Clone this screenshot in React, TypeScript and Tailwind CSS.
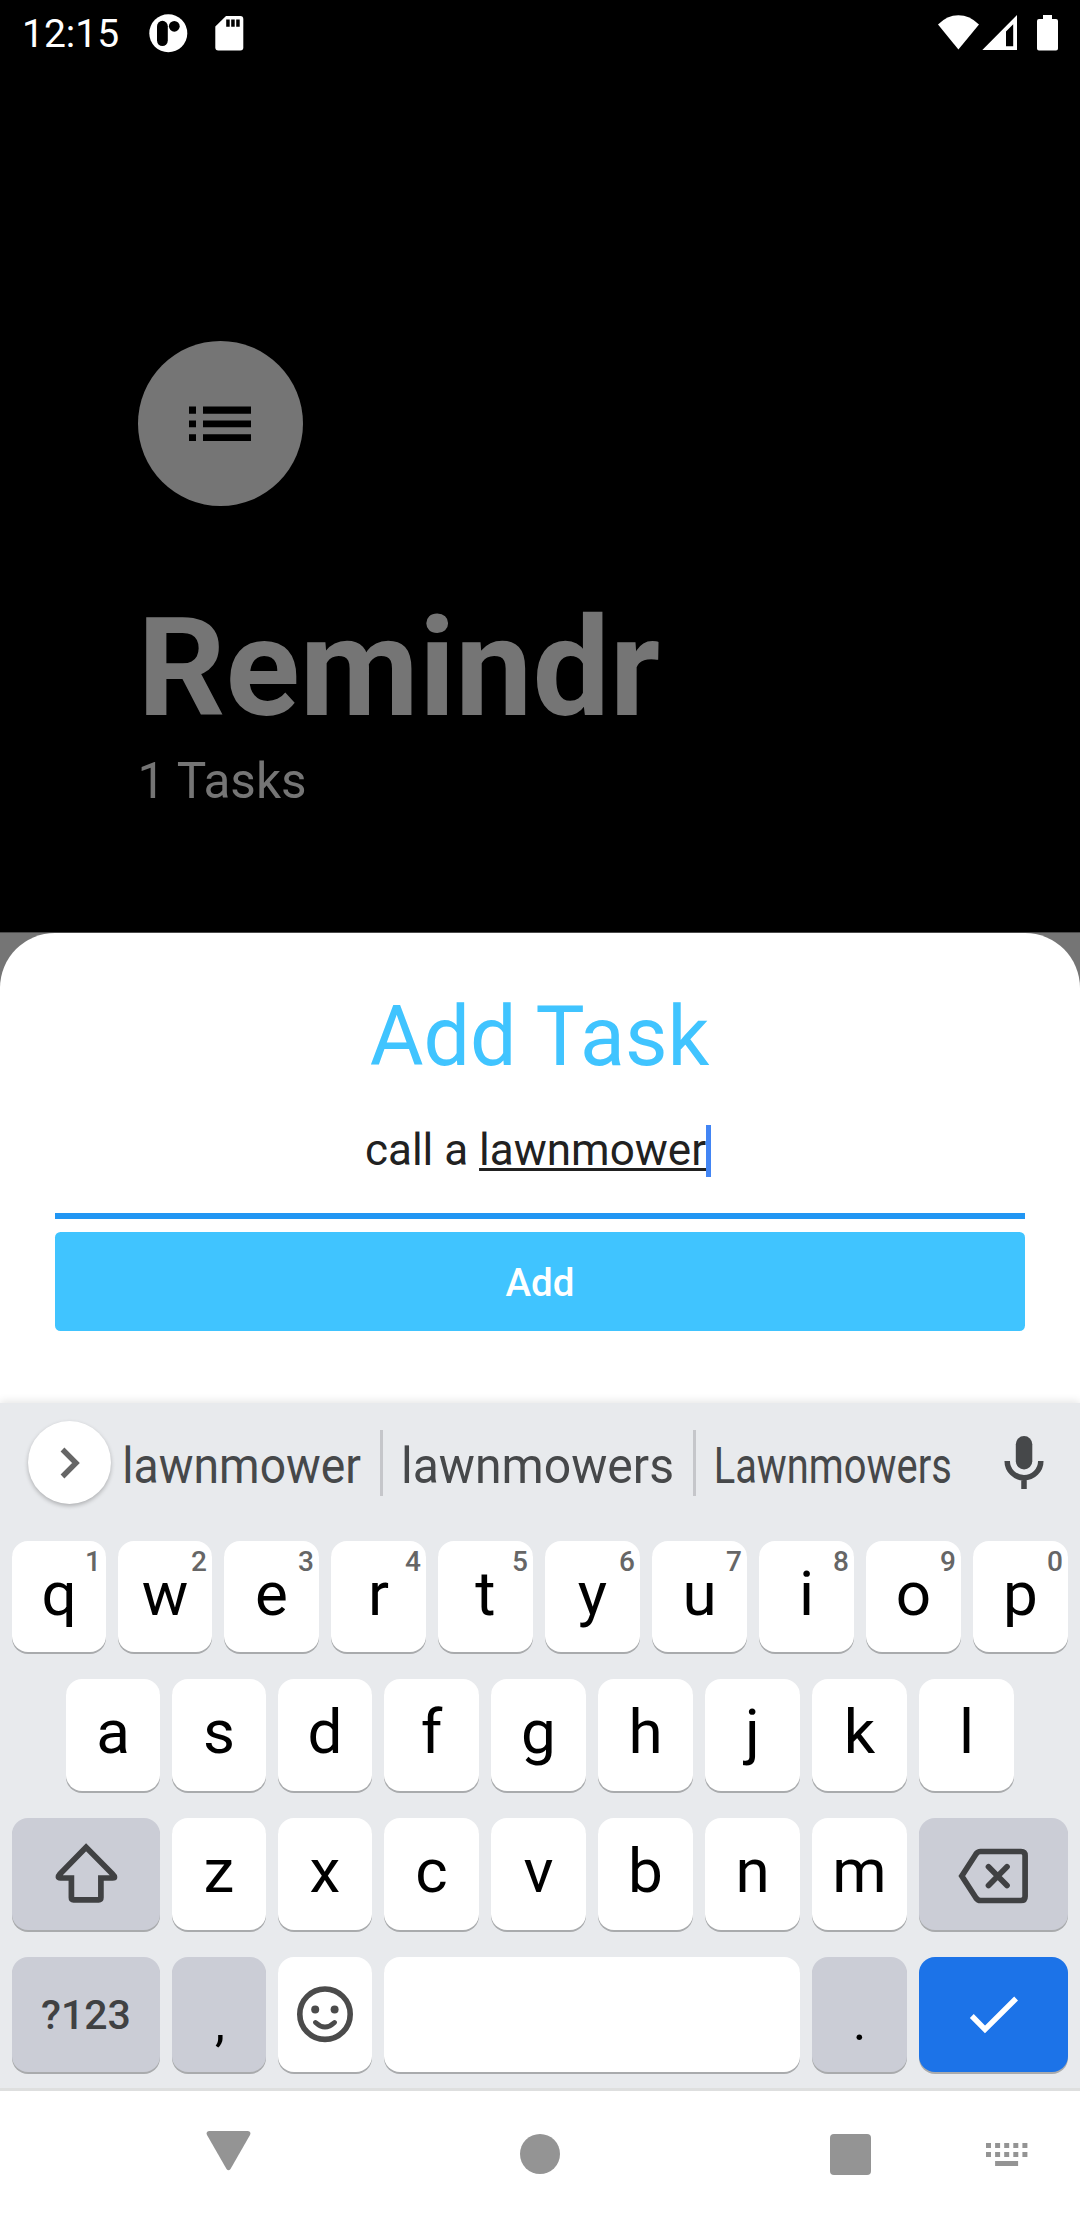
import type { ReactNode } from "react";

function Key({
  label,
  hint,
  tone = "light",
  size = "flex-1",
  children,
}: {
  label?: string;
  hint?: string;
  tone?: "light" | "gray" | "blue";
  size?: string;
  children?: ReactNode;
}) {
  const tones = {
    light: "bg-white",
    gray: "bg-[#cbcdd6]",
    blue: "bg-[#1c73e8]",
  };
  return (
    <div
      className={`relative flex h-full min-w-0 items-center justify-center rounded-2xl shadow-[0_2px_0_#a9abad] ${size} ${tones[tone]}`}
    >
      {label && <span className="pb-[6px] text-[62px] leading-[72px] text-black">{label}</span>}
      {hint && (
        <span className="absolute top-[7px] right-[5px] text-[28px] leading-[28px] font-medium text-[#666666]">
          {hint}
        </span>
      )}
      {children}
    </div>
  );
}

function StatusBar() {
  return (
    <div className="flex h-[66px] items-start text-white">
      <span className="ml-[22px] pt-[11px] text-[39px] leading-[46px]">12:15</span>
      <svg className="ml-auto h-[66px] w-[110px]" viewBox="145 0 110 66" fill="#fff">
        <circle cx="168.3" cy="33.2" r="19" />
        <rect x="157" y="20.8" width="10.8" height="25.2" rx="5.4" fill="#000" />
        <circle cx="174.3" cy="26.3" r="5.4" fill="#000" />
        <path d="M226 16H240.300Q243.300 16 243.300 19V47.600Q243.300 50.600 240.300 50.600H218.300Q215.300 50.600 215.300 47.600V26.500Z" />
        <path d="M226.200 19.500h3.500v7.300h-3.500zM231.200 19.500h3.500v7.300h-3.500zM236.200 19.500h3.500v7.300h-3.500z" fill="#000" />
      </svg>
      <svg className="ml-[675px] h-[66px] w-[150px]" viewBox="930 0 150 66" fill="#fff">
        <path d="M958.400 49.500L938 24.500Q947 15.200 958.400 15.200T979 24.500Z" />
        <path fillRule="evenodd" d="M982.300 50L1017 15V50ZM1006 46.300H1013.200V24.200L1006 31.400Z" />
        <path d="M1043 15h9v4h4q2 0 2 2v27.600q0 2-2 2h-17q-2 0-2-2V21q0-2 2-2h4z" />
      </svg>
    </div>
  );
}

function SuggestionStrip() {
  return (
    <div className="flex h-[138px] items-start text-[49.5px] leading-[66px] text-[#46484a]">
      <div className="mt-[18px] ml-[28px] flex size-[83px] shrink-0 items-center justify-center rounded-full bg-white shadow-[0_2px_4px_rgba(0,0,0,0.25)]">
        <svg className="h-[36px] w-[24px]" viewBox="0 0 24 36" fill="none">
          <path d="M4.500 4.500L18 18L4.500 31.500" stroke="#666666" strokeWidth="5.400" />
        </svg>
      </div>
      <span className="mt-[30px] flex w-[269px] shrink-0 justify-center pr-[8px] whitespace-nowrap">
        <span className="scale-x-[0.935]">lawnmower</span>
      </span>
      <div className="mt-[27px] h-[66px] w-[3px] shrink-0 bg-[#c5c6ca]" />
      <span className="mt-[30px] flex w-[310px] shrink-0 justify-center pr-[2px] whitespace-nowrap">
        <span className="scale-x-[0.972]">lawnmowers</span>
      </span>
      <div className="mt-[27px] h-[66px] w-[3px] shrink-0 bg-[#c5c6ca]" />
      <span className="mt-[30px] flex w-[276px] shrink-0 justify-center pr-[2px] whitespace-nowrap">
        <span className="scale-x-[0.806]">Lawnmowers</span>
      </span>
      <svg className="mt-[29px] ml-[28px] h-[62px] w-[48px] shrink-0" viewBox="1000 1432 48 62">
        <rect x="1015.800" y="1436" width="16.500" height="33.500" rx="8.250" fill="#46484a" />
        <path d="M1007.200 1461a16.800 16.800 0 0 0 33.600 0M1024 1477v12" fill="none" stroke="#46484a" strokeWidth="5.500" />
      </svg>
    </div>
  );
}

function Keyboard() {
  return (
    <div className="flex h-[688px] flex-col border-b-[3px] border-[#dedfdf] bg-[#e8eaed] shadow-[0_-2px_8px_rgba(0,0,0,0.10)]">
      <SuggestionStrip />
      <div className="flex h-[111px] gap-3 px-3">
        {"qwertyuiop".split("").map((c, i) => (
          <Key key={c} label={c} hint={String((i + 1) % 10)} size={i < 2 ? "w-[94px]" : "flex-1"} />
        ))}
      </div>
      <div className="mt-[27px] flex h-[112px] gap-3 px-[66px]">
        {"asdfghjkl".split("").map((c, i) => (
          <Key key={c} label={c} size={i < 3 ? "w-[94px]" : "flex-1"} />
        ))}
      </div>
      <div className="mt-[27px] flex h-[112px] gap-3 px-3">
        <Key tone="gray" size="w-[148px]">
          <svg className="h-[72px] w-[72px]" viewBox="49.500 1838 72 72" fill="none" stroke="#404143" strokeWidth="5.700">
            <path
              d="M85.600 1847.300L59.500 1874Q56 1878 60 1878H70.900V1897.500Q70.900 1899.800 73 1899.800H98.200Q100.400 1899.800 100.400 1897.500V1878H112Q116 1878 112 1874Z"
            />
          </svg>
        </Key>
        {"zxcvbnm".split("").map((c, i) => (
          <Key key={c} label={c} size={i < 2 ? "w-[94px]" : "flex-1"} />
        ))}
        <Key tone="gray" size="w-[149px]">
          <svg className="h-[62px] w-[78px]" viewBox="954.500 1843.500 78 62" fill="none" stroke="#404143" strokeWidth="5.700">
            <path d="M961.300 1876.500L975.500 1854.500Q977.300 1852 980 1852H1020.500Q1024.600 1852 1024.600 1856V1897Q1024.600 1901 1020.500 1901H980Q977.300 1901 975.500 1898.500Z" />
            <path d="M988 1867.300L1006.500 1886M1006.500 1867.300L988 1886" strokeLinecap="round" />
          </svg>
        </Key>
      </div>
      <div className="mt-[27px] flex h-[115px] gap-3 px-3">
        <Key tone="gray" size="w-[148px]">
          <span className="pt-px text-[41px] leading-[48px] font-medium text-[#404143]">?123</span>
        </Key>
        <Key tone="gray" size="w-[94px]">
          <span className="pt-[16px] pl-[2px] text-[50px] leading-[58px] text-black">,</span>
        </Key>
        <Key size="w-[94px]">
          <svg className="size-[60px]" viewBox="295 1984 60 60" fill="none" stroke="#4b4b4b">
            <circle cx="325" cy="2013.200" r="25.200" strokeWidth="5.600" />
            <circle cx="315.200" cy="2008.500" r="4" fill="#4b4b4b" stroke="none" />
            <circle cx="334.600" cy="2008.500" r="4" fill="#4b4b4b" stroke="none" />
            <path d="M315.500 2021.500Q325 2030.500 334.500 2021.500" strokeWidth="4.800" strokeLinecap="round" />
          </svg>
        </Key>
        <Key />
        <Key tone="gray" size="w-[95px]">
          <span className="pt-[16px] text-[50px] leading-[58px] text-black">.</span>
        </Key>
        <Key tone="blue" size="w-[149px]">
          <svg className="h-[40px] w-[52px]" viewBox="967.700 1994.500 52 40" fill="none">
            <path d="M971.500 2015.500L984.700 2029L1015.800 1998" stroke="#fff" strokeWidth="5.400" />
          </svg>
        </Key>
      </div>
    </div>
  );
}

function NavigationBar() {
  return (
    <div className="flex h-[129px] items-start bg-white">
      <svg className="mt-[40px] ml-[206px] h-[40px] w-[45px]" viewBox="0 0 45 40" fill="#949494">
        <path d="M3 0H42Q45.500 .5 44 4L24.500 38Q22.500 40.500 20.500 38L1 4Q-.5 .5 3 0Z" />
      </svg>
      <div className="mt-[43px] ml-[269px] size-[40px] rounded-full bg-[#949494]" />
      <div className="mt-[43px] ml-[270px] size-[41px] rounded-[4px] bg-[#949494]" />
      <svg className="mt-[52px] ml-[115px] h-[24px] w-[43px]" viewBox="0 0 43 24" fill="#949494">
        {[0, 1, 2, 3, 4].map((n) => (
          <g key={n}>
            <rect x={n * 9.1} y="0" width="5" height="5" />
            <rect x={n * 9.1} y="9" width="5" height="5" />
          </g>
        ))}
        <rect x="9.100" y="18" width="23" height="5" />
      </svg>
    </div>
  );
}

export default function App() {
  return (
    <div className="flex h-[2220px] w-[1080px] flex-col overflow-hidden bg-white font-[Roboto,sans-serif]">
      <div className="flex h-[933px] shrink-0 flex-col border-b border-[#4a4a4a] bg-black text-[#757575]">
        <StatusBar />
        <div className="mt-[275px] ml-[137.500px] flex size-[165px] items-center justify-center rounded-full bg-[#757575]">
          <svg className="h-[36px] w-[62px]" viewBox="189 406 62 36" fill="#000">
            <path d="M189 406.500h7v7.200h-7zM189 420.500h7v6.800h-7zM189 434.300h7v6.800h-7zM203 406.500h48v7.200h-48zM203 420.500h48v6.800h-48zM203 434.300h48v6.800h-48z" />
          </svg>
        </div>
        <h1 className="mt-[82px] ml-[137.500px] text-[137.500px] leading-[160px] font-bold">Remindr</h1>
        <p className="mt-[4px] ml-[137.500px] text-[49.500px] leading-[58px]">1 Tasks</p>
      </div>
      <div className="h-[470px] shrink-0 bg-[#757575]">
        <div className="flex h-full flex-col rounded-t-[55px] bg-white px-[55px] text-center">
          <h2 className="mt-[56px] pr-px text-[82.500px] leading-[96px] text-[#40c4ff]">Add Task</h2>
          <div className="mt-[39px] flex h-[95px] items-start justify-center border-b-[6px] border-[#2196f3] pr-[4px] text-[44px] leading-[52px] text-[#212121]">
            <span className="whitespace-pre">
              call a <span className="underline decoration-[2.500px] underline-offset-[3px]">lawnmower</span>
            </span>
            <span className="mt-[1px] h-[52px] w-[5px] bg-[#4285f4]" />
          </div>
          <button className="mt-[13px] h-[99px] rounded-[5.500px] bg-[#40c4ff] pt-[2px] text-[38.500px] font-medium text-white">
            Add
          </button>
        </div>
      </div>
      <Keyboard />
      <NavigationBar />
    </div>
  );
}
